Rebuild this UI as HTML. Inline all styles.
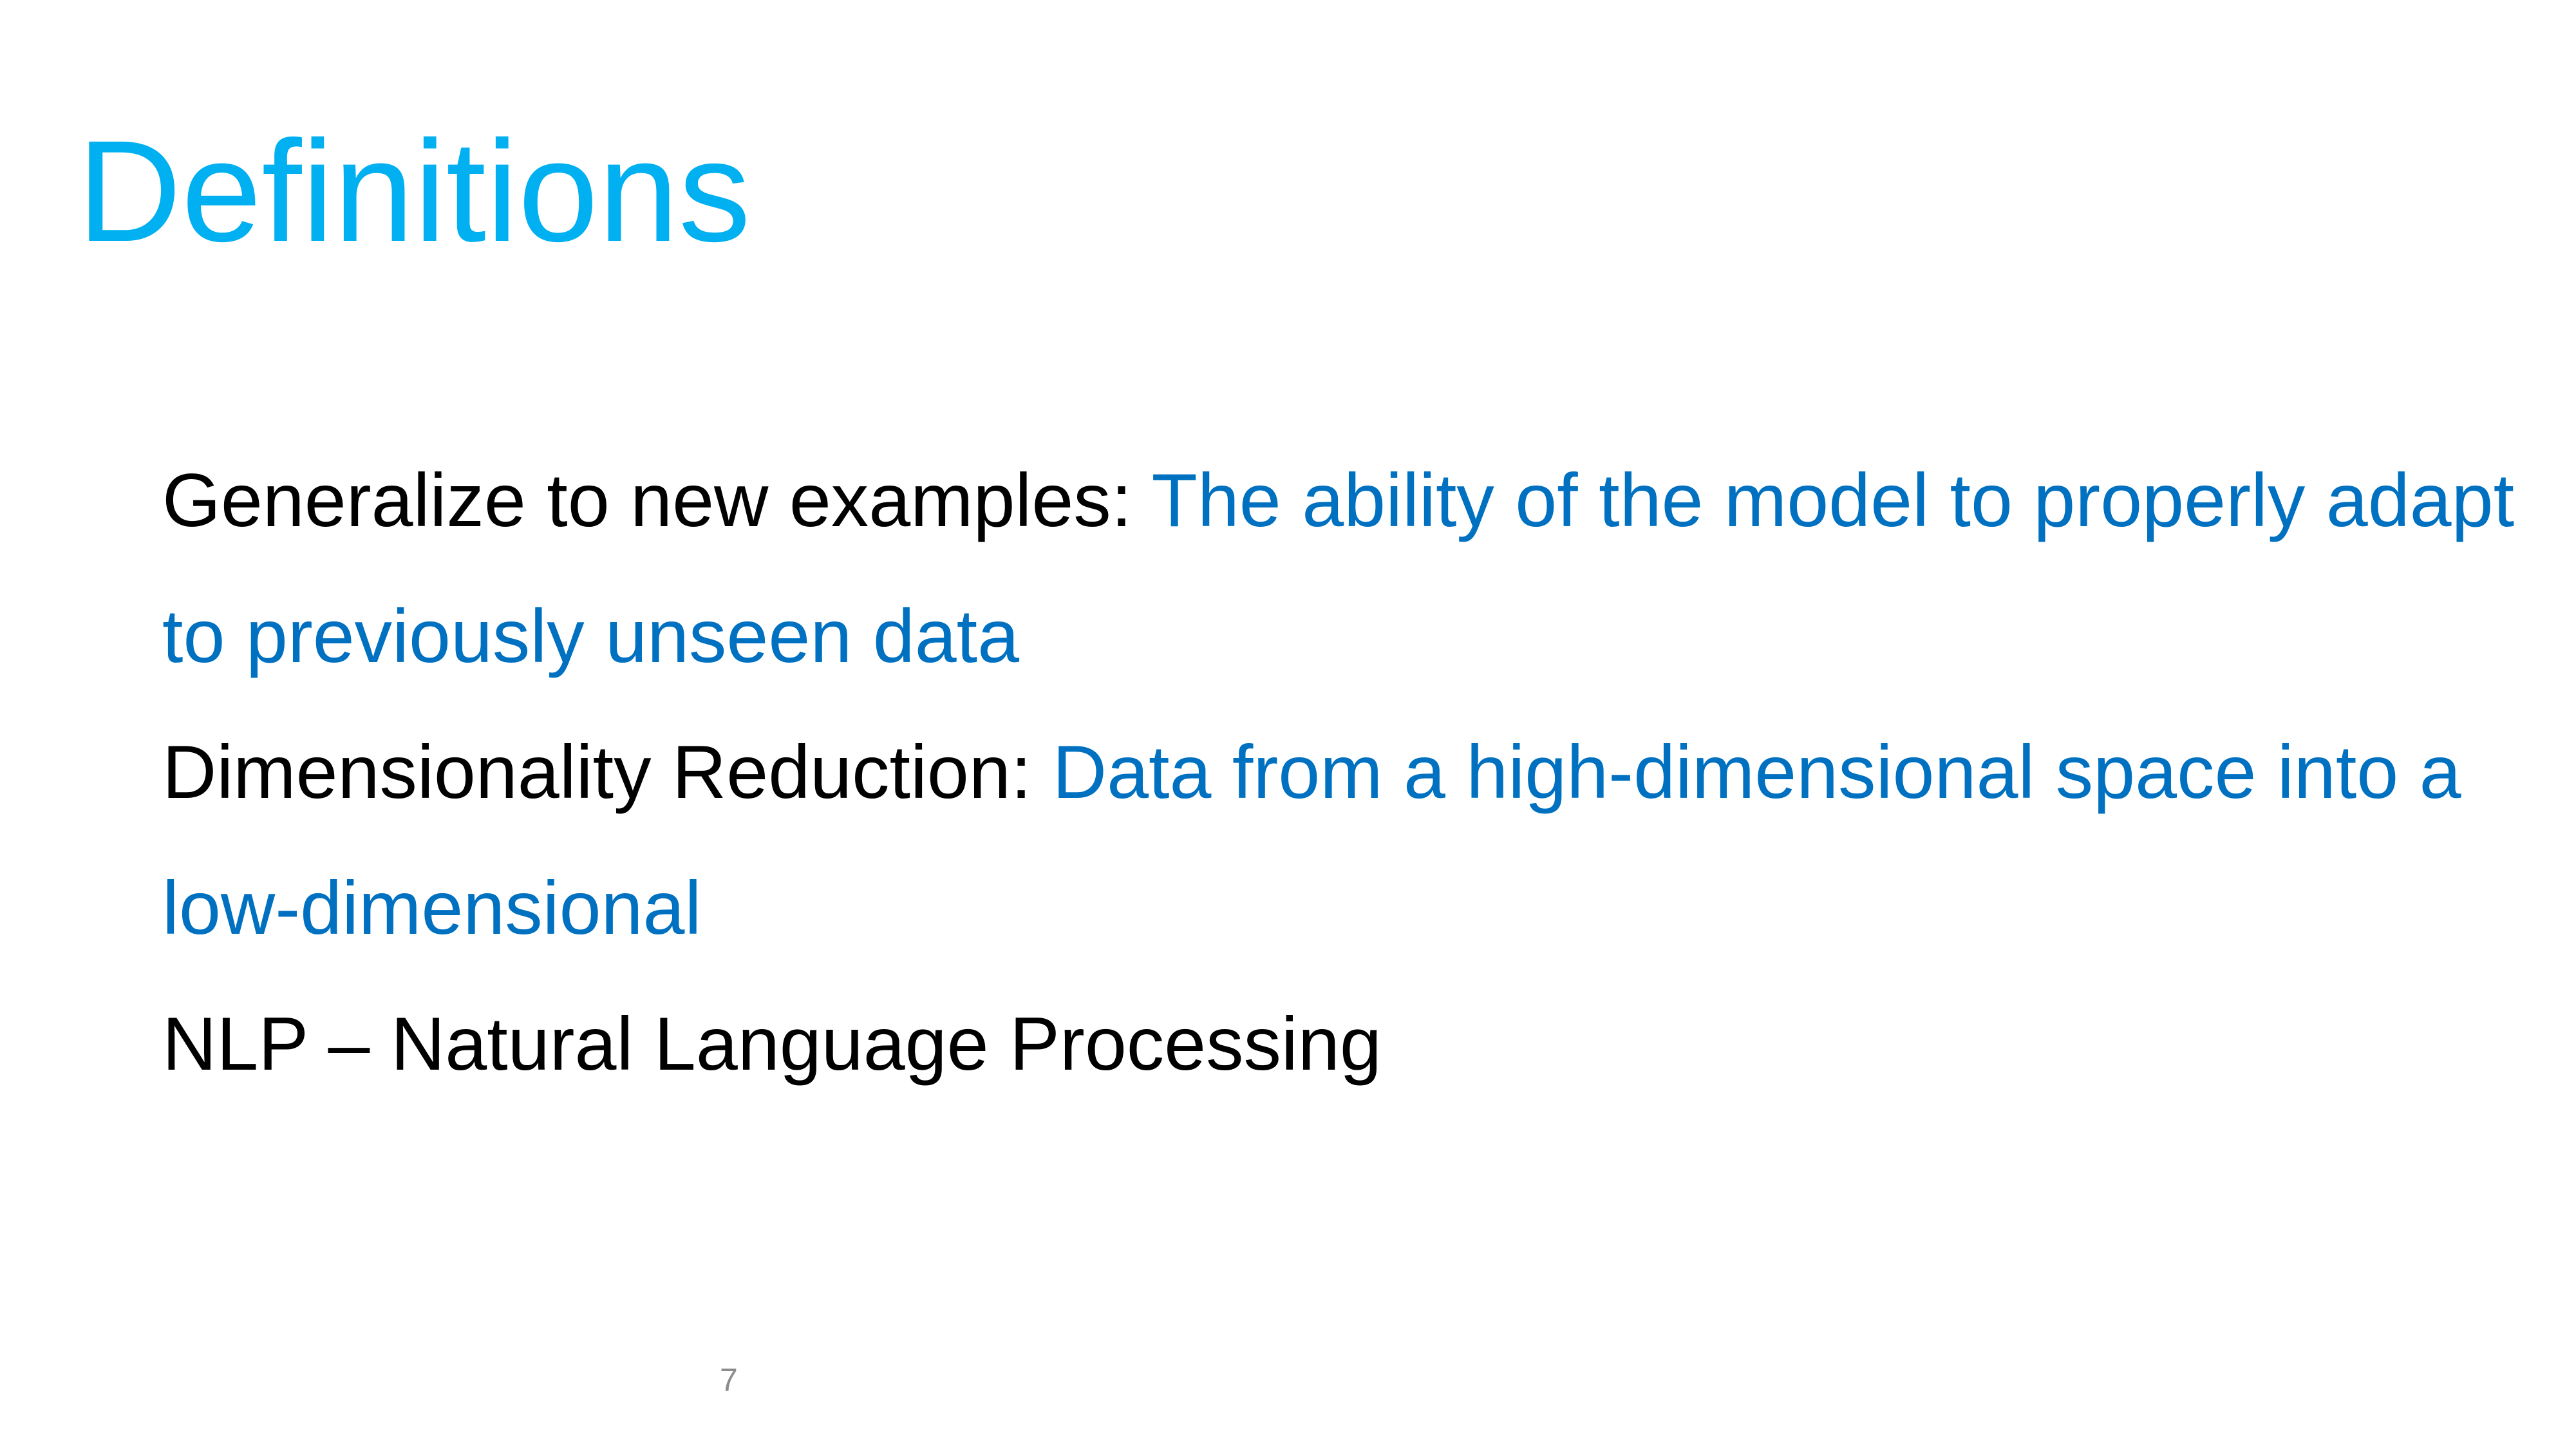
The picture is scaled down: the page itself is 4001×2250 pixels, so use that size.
<!DOCTYPE html>
<html><head><meta charset="utf-8"><style>
html,body{margin:0;padding:0;background:#fff;}
body{width:4001px;height:2250px;position:relative;overflow:hidden;font-family:"Liberation Sans",sans-serif;}
.t{position:absolute;left:120px;top:185px;font-size:224px;line-height:1;color:#00b0f0;white-space:nowrap;}
.b{position:absolute;left:252px;top:671px;font-size:116.8px;line-height:211px;color:#000;white-space:nowrap;}
.b span{color:#0070c0;}
.n{position:absolute;left:1118px;top:2118px;font-size:50px;line-height:1;color:#8c8c8c;}
</style></head><body>
<div class="t">Definitions</div>
<div class="b">Generalize to new examples: <span>The ability of the model to properly adapt</span><br><span>to previously unseen data</span><br>Dimensionality Reduction: <span>Data from a high-dimensional space into a</span><br><span>low-dimensional</span><br>NLP – Natural Language Processing</div>
<div class="n">7</div>
</body></html>
